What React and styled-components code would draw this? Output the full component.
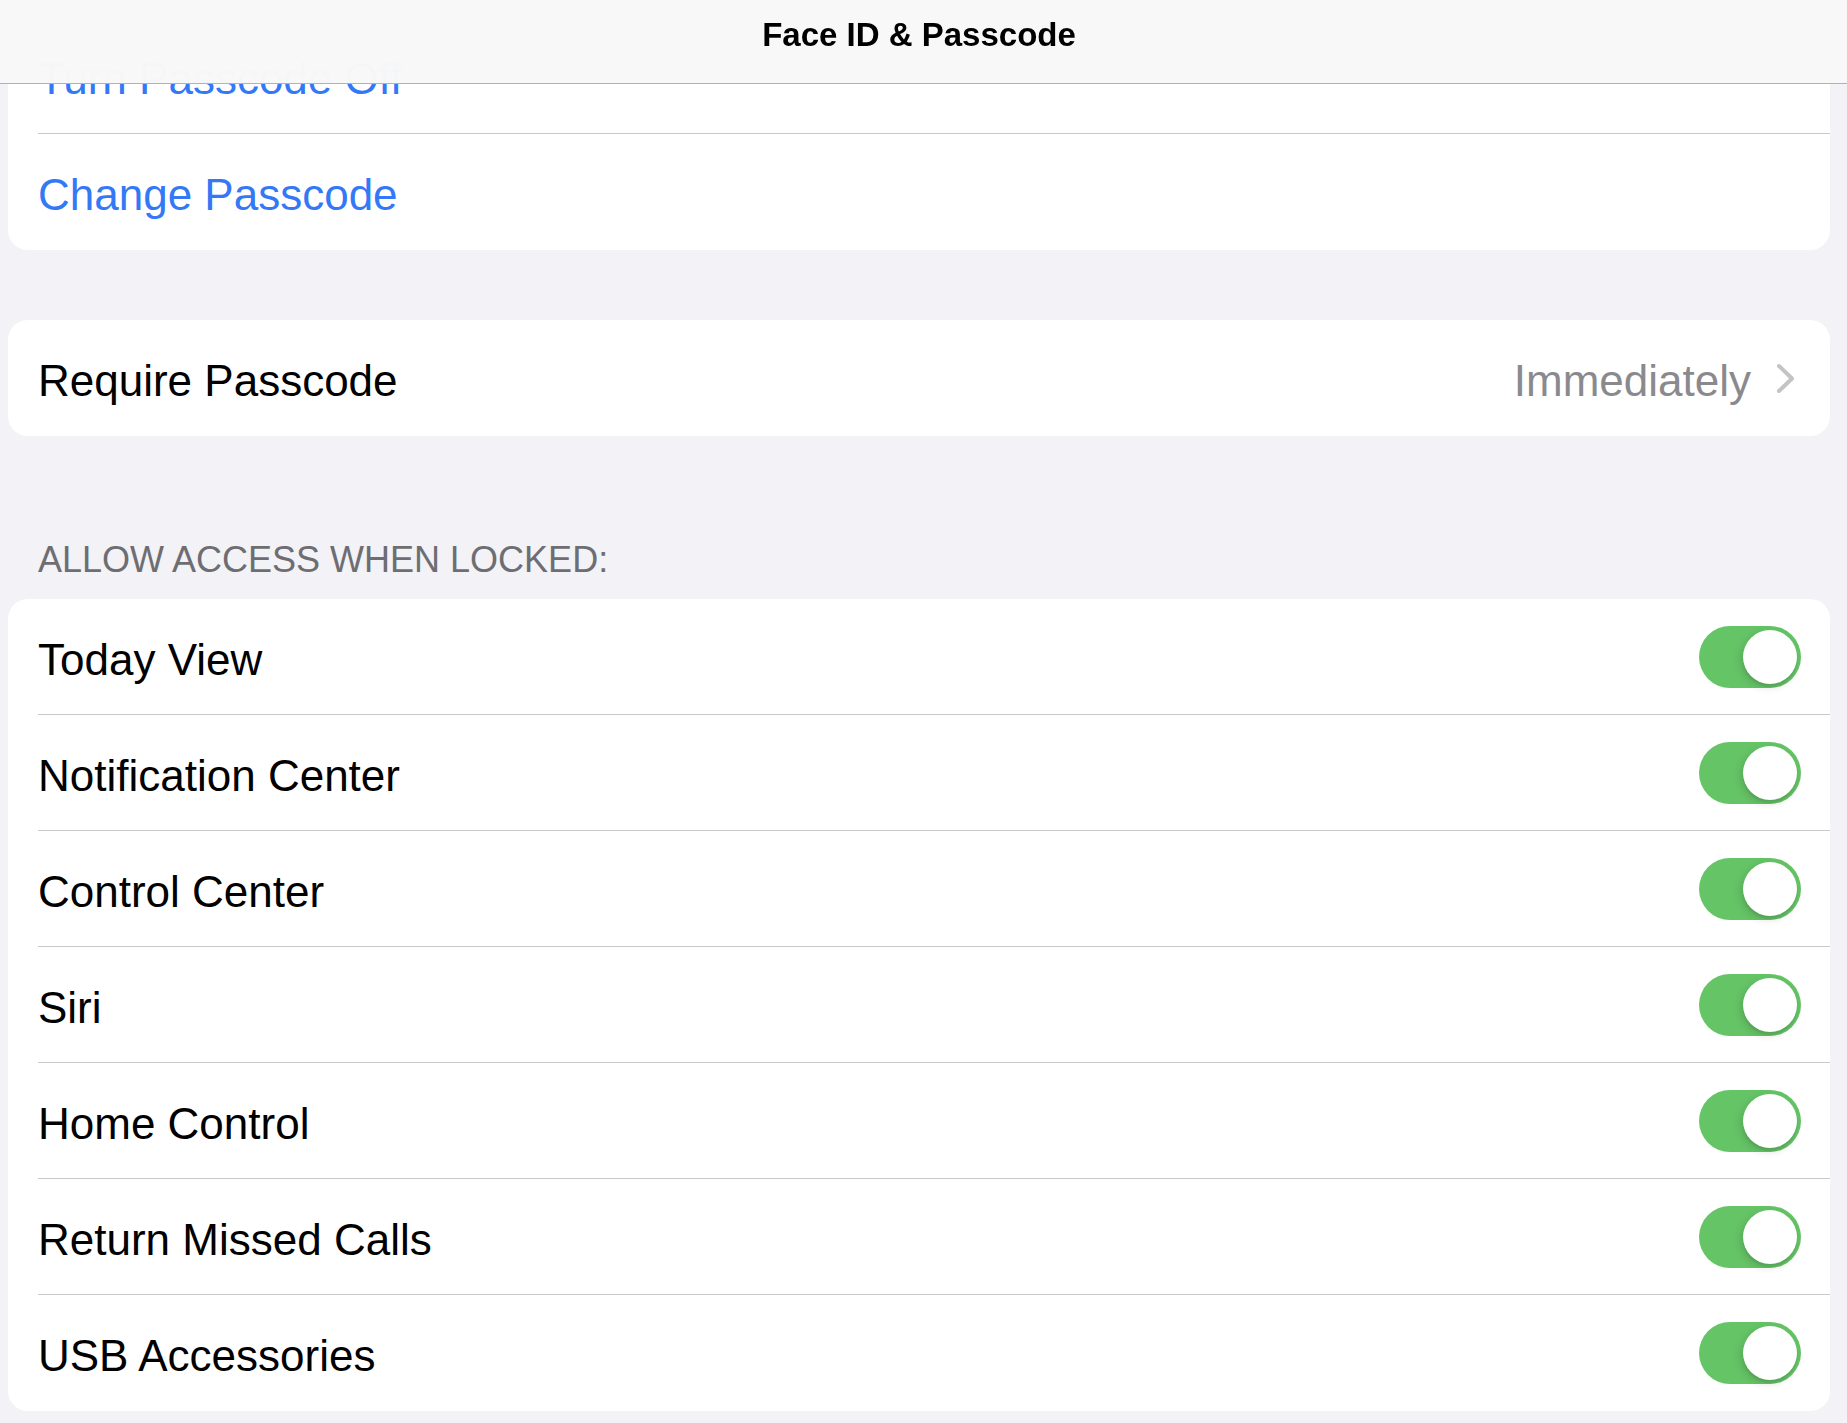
import React from "react";
import styled, { createGlobalStyle } from "styled-components";

const GlobalStyle = createGlobalStyle`
  body {
    margin: 0;
    background: #f2f2f7;
    font-family: "Liberation Sans", Arial, sans-serif;
    -webkit-font-smoothing: antialiased;
  }
`;

const NavBar = styled.header`
  position: fixed;
  top: 0;
  left: 0;
  right: 0;
  height: 84px;
  box-sizing: border-box;
  padding: 16px 17px 0 8px;
  display: flex;
  justify-content: center;
  background: rgba(248, 248, 248, 0.99);
  border-bottom: 1px solid #b2b2b2;
  z-index: 10;
`;

const Title = styled.h1`
  margin: 0;
  font-size: 33px;
  font-weight: 700;
  color: #000;
`;

const Page = styled.main`
  padding: 18px 17px 12px 8px;
  min-height: 100vh;
  box-sizing: border-box;
`;

const Card = styled.section`
  background: #fff;
  border-radius: 20px;
  overflow: hidden;
  margin-bottom: ${(p) => p.$gap || 0}px;
`;

const SectionTitle = styled.div`
  padding: 0 0 19px 30px;
  font-size: 36px;
  line-height: 40px;
  color: #6d6d72;
  text-transform: uppercase;
`;

const Row = styled.div`
  padding-left: 30px;
`;

const RowInner = styled.div`
  display: flex;
  align-items: center;
  justify-content: space-between;
  height: 116px;
  box-sizing: border-box;
  padding-right: ${(p) => p.$padRight || 29}px;
  border-bottom: ${(p) => (p.$last ? "none" : "1px solid #c8c7cc")};
`;

const Label = styled.span`
  padding-top: 6px;
  font-size: 44px;
  color: ${(p) => (p.$link ? "#3478f6" : "#000")};
`;

const Detail = styled.div`
  display: flex;
  align-items: center;
  gap: 25px;
`;

const DetailText = styled.span`
  padding-top: 6px;
  font-size: 44px;
  color: #8a8a8e;
`;

const Switch = styled.div`
  width: 102px;
  height: 62px;
  box-sizing: border-box;
  padding: 4px;
  border-radius: 31px;
  background: #65c466;
  display: flex;
  justify-content: ${(p) => (p.$on ? "flex-end" : "flex-start")};
`;

const Knob = styled.div`
  width: 54px;
  height: 54px;
  border-radius: 50%;
  background: #fff;
  box-shadow: -2px 3px 8px rgba(0, 0, 0, 0.15), 0 3px 1px rgba(0, 0, 0, 0.06);
`;

const Chevron = () => (
  <svg width="19" height="31" viewBox="0 0 19 31">
    <polyline
      points="3,3 16,15.5 3,28"
      fill="none"
      stroke="#c4c4c7"
      strokeWidth="4"
      strokeLinecap="round"
      strokeLinejoin="round"
    />
  </svg>
);

const lockedItems = [
  "Today View",
  "Notification Center",
  "Control Center",
  "Siri",
  "Home Control",
  "Return Missed Calls",
  "USB Accessories",
];

export default function App() {
  return (
    <>
      <GlobalStyle />
      <NavBar>
        <Title>Face ID &amp; Passcode</Title>
      </NavBar>
      <Page>
        <Card $gap={70}>
          <Row>
            <RowInner>
              <Label $link>Turn Passcode Off</Label>
            </RowInner>
          </Row>
          <Row>
            <RowInner $last>
              <Label $link>Change Passcode</Label>
            </RowInner>
          </Row>
        </Card>

        <Card $gap={104}>
          <Row>
            <RowInner $last $padRight={35}>
              <Label>Require Passcode</Label>
              <Detail>
                <DetailText>Immediately</DetailText>
                <Chevron />
              </Detail>
            </RowInner>
          </Row>
        </Card>

        <SectionTitle>Allow Access When Locked:</SectionTitle>
        <Card>
          {lockedItems.map((item, i) => (
            <Row key={item}>
              <RowInner $last={i === lockedItems.length - 1}>
                <Label>{item}</Label>
                <Switch $on>
                  <Knob />
                </Switch>
              </RowInner>
            </Row>
          ))}
        </Card>
      </Page>
    </>
  );
}
